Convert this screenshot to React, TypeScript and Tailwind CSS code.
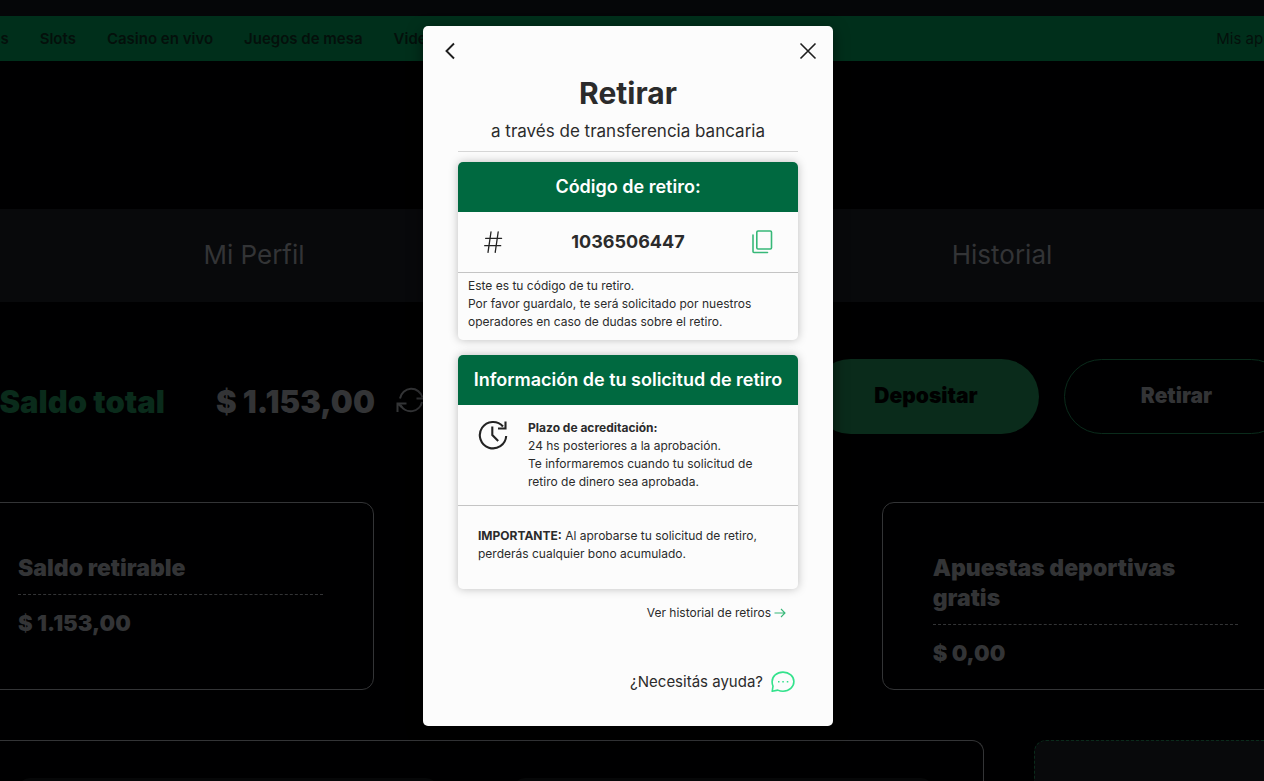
import { useState } from "react";

const navLinks = ["Deportes", "Slots", "Casino en vivo", "Juegos de mesa", "Video Bingo"];

const balances = [
  { id: 1, title: "Saldo retirable", amount: "$ 1.153,00" },
  { id: 2, title: "", amount: "" },
  { id: 3, title: "Apuestas deportivas gratis", amount: "$ 0,00" },
];

function RefreshIcon() {
  return (
    <svg width="30" height="28" viewBox="0 0 30 28" fill="none" stroke="#333436" strokeWidth="2">
      <path d="M4 11.500a11.500 11.500 0 0 1 22.500-1M26 15a11.500 11.500 0 0 1-21.500 3" />
      <path d="M28 4v7.500h-7.500M1.500 25v-8.500h9M2 16.500l4 4" />
    </svg>
  );
}

function HashIcon() {
  return (
    <svg width="20" height="22" viewBox="0 0 20 22" fill="none" stroke="#232323" strokeWidth="1.3" strokeLinecap="round">
      <path d="M8 .8 5 21.300M15.200.8l-3 20.500M2.600 7.300h16M1.700 14.700h16" />
    </svg>
  );
}

function CopyIcon() {
  return (
    <svg width="22" height="24" viewBox="0 0 22 24" fill="none" stroke="#37b878" strokeWidth="1.600" strokeLinecap="round">
      <rect x="5.800" y="1" width="14.700" height="18" rx="1.200" />
      <path d="M2 5v16.500q0 1 1 1H16.500" />
    </svg>
  );
}

function ClockIcon() {
  return (
    <svg width="30" height="30" viewBox="0 0 30 30" fill="none" stroke="#232323" strokeWidth="2.100">
      <path d="M28.200 16A13.200 13.200 0 1 1 25 6.500" />
      <path d="M27.500 1.500v7h-7.500M14.300 6.500v8.500l5.900 5.900" />
    </svg>
  );
}

function ChatIcon() {
  return (
    <svg width="24" height="22" viewBox="0 0 24 22" fill="none" stroke="#33e28c" strokeWidth="1.600" strokeLinejoin="round">
      <path d="M1.200 20.300 2 15.200C1.400 14 1.100 12.400 1.100 10.700 1.100 5.200 5.800 1.100 12 1.100s10.900 4.100 10.900 9.500-4.700 9.600-10.900 9.600c-2 0-3.700-.4-5.200-1.100z" />
      <path d="M7 10.700h1.500M11.300 10.700h1.500M15.800 10.700h1.500" />
    </svg>
  );
}

function Background() {
  return (
    <div className="flex flex-col">
      <div className="h-4 bg-[#050608]" />
      <nav className="flex h-[45px] items-center justify-center bg-[#002f1b] pt-px pr-3 text-[15px] text-[#04100b]">
        <div className="flex w-[1368px] shrink-0 items-center justify-between">
          <div className="flex gap-[31px] font-semibold">
            {navLinks.map((link) => (
              <a key={link} href="#" className="whitespace-nowrap">{link}</a>
            ))}
          </div>
          <a href="#" className="whitespace-nowrap">Mis apuestas</a>
        </div>
      </nav>

      <div className="mt-[148px] flex justify-center bg-[#08090b] pr-2">
        <div className="grid w-[1496px] shrink-0 grid-cols-2 text-[26px] text-[#333436]">
          <a href="#" className="pt-7 pb-[30px] text-center leading-[35px]">Mi Perfil</a>
          <a href="#" className="pt-7 pb-[30px] text-center leading-[35px]">Historial</a>
        </div>
      </div>

      <div className="flex justify-center pr-2 pt-[57px] text-[#333436]">
        <div className="w-[1322px] shrink-0">
          <div className="flex h-[75px] items-center justify-between">
            <div className="flex items-center pt-2 text-[31px] font-black">
              <span className="w-[198px] pt-1 whitespace-nowrap text-right text-[#0a2b1b]">Saldo total</span>
              <span className="ml-[51px] w-[154px] pt-1 whitespace-nowrap">$ 1.153,00</span>
              <button type="button" aria-label="Actualizar saldo" className="ml-[26px]">
                <RefreshIcon />
              </button>
            </div>
            <div className="flex gap-[25px] text-[21px] font-black">
              <button type="button" className="h-[75px] w-[226px] rounded-full bg-[#0a2b1b] pb-0.5 text-black">Depositar</button>
              <button type="button" className="h-[75px] w-[225px] rounded-full border border-[#0a2b1b] pb-0.5">Retirar</button>
            </div>
          </div>

          <div className="mt-[68px] grid grid-cols-3 gap-[50px]">
            {balances.map((item) => (
              <div key={item.id} className="h-[188px] rounded-xl border border-[#333436] px-[50px] py-[50px] text-[22px] leading-[30px] font-black">
                <h3 className="text-[23px]">{item.title}</h3>
                <hr className="mt-[11px] mb-[13px] border-dashed border-[#333436]" />
                <p>{item.amount}</p>
              </div>
            ))}
          </div>

          <div className="mt-[50px] grid grid-cols-[1fr_255px] gap-[50px]">
            <div className="grid grid-cols-2 gap-[75px] rounded-t-xl border border-b-0 border-[#333436] px-[50px] pt-[37px]">
              <div className="h-20 rounded-t-xl bg-[#060708]" />
              <div className="h-20 rounded-t-xl bg-[#060708]" />
            </div>
            <div className="rounded-t-xl border border-b-0 border-dashed border-[#0a2b1b] bg-[#08090b]" />
          </div>
        </div>
      </div>
    </div>
  );
}

function WithdrawModal({ onClose }: { onClose: () => void }) {
  return (
    <div role="dialog" aria-label="Retirar" className="w-[410px] rounded-[5px] bg-[#fcfcfc] pb-8 text-[#2b2b2b] shadow-[0_5px_15px_rgba(0,0,0,0.5)]">
      <div className="flex h-12 items-center justify-between px-4 pt-0.5">
        <button type="button" aria-label="Volver" className="flex size-5 items-center justify-center">
          <svg width="12" height="18" viewBox="0 0 12 18" fill="none" stroke="#1e1e1e" strokeWidth="1.900">
            <path d="M11 1.500 3.500 9l7.500 7.500" />
          </svg>
        </button>
        <button type="button" aria-label="Cerrar" onClick={onClose} className="flex size-[18px] items-center justify-center">
          <svg width="18" height="18" viewBox="0 0 18 18" fill="none" stroke="#1e1e1e" strokeWidth="1.600">
            <path d="M1.500 1.500l15 15M16.500 1.500l-15 15" />
          </svg>
        </button>
      </div>

      <div className="px-[35px]">
        <header className="border-b border-[#d6d6d6] pb-2 text-center">
          <h1 className="text-[30px] leading-[38px] font-bold">Retirar</h1>
          <p className="mt-[7px] text-[17px] leading-6">a través de transferencia bancaria</p>
        </header>

        <section className="mt-[10px] overflow-hidden rounded-[5px] shadow-[0_0_10px_rgba(0,0,0,0.25)]">
          <h2 className="bg-[#006940] text-center text-lg leading-[50px] font-semibold text-white">Código de retiro:</h2>
          <div className="grid h-[61px] grid-cols-[22px_1fr_22px] items-center border-b border-[#c4c4c4] px-[25px]">
            <HashIcon />
            <span className="text-center text-lg font-bold">1036506447</span>
            <button type="button" aria-label="Copiar código">
              <CopyIcon />
            </button>
          </div>
          <p className="px-[10px] pt-1 pb-[9px] text-xs leading-[18px]">
            Este es tu código de tu retiro.<br />
            Por favor guardalo, te será solicitado por nuestros operadores en caso de dudas sobre el retiro.
          </p>
        </section>

        <section className="mt-[15px] overflow-hidden rounded-[5px] text-xs leading-[18px] shadow-[0_0_10px_rgba(0,0,0,0.25)]">
          <h2 className="bg-[#006940] text-center text-lg leading-[50px] font-semibold text-white">Información de tu solicitud de retiro</h2>
          <div className="flex gap-5 border-b border-[#c4c4c4] px-5 py-[14px]">
            <div className="shrink-0 pt-px">
              <ClockIcon />
            </div>
            <div>
              <h3 className="font-bold">Plazo de acreditación:</h3>
              <p>24 hs posteriores a la aprobación.</p>
              <p>Te informaremos cuando tu solicitud de retiro de dinero sea aprobada.</p>
            </div>
          </div>
          <p className="px-5 pt-[21px] pb-[26px]">
            <strong>IMPORTANTE:</strong> Al aprobarse tu solicitud de retiro, perderás cualquier bono acumulado.
          </p>
        </section>

        <a href="#" className="mt-[15px] flex items-center justify-end gap-[3px] pr-3 text-xs leading-[18px]">
          Ver historial de retiros
          <svg width="12" height="10" viewBox="0 0 12 10" fill="none" stroke="#37b878" strokeWidth="1.100">
            <path d="M.5 5h10.500M7 1l4 4-4 4" />
          </svg>
        </a>

        <a href="#" className="mt-12 flex items-center justify-end gap-2 pr-[3px] text-[15px] leading-6">
          ¿Necesitás ayuda?
          <ChatIcon />
        </a>
      </div>
    </div>
  );
}

function App() {
  const [open, setOpen] = useState(true);

  return (
    <div className="relative h-screen overflow-hidden bg-[#000001] font-['Inter',sans-serif]">
      <Background />
      {open && (
        <div className="absolute inset-0 flex items-start justify-center pt-[26px] pr-2">
          <WithdrawModal onClose={() => setOpen(false)} />
        </div>
      )}
    </div>
  );
}

export default App;
